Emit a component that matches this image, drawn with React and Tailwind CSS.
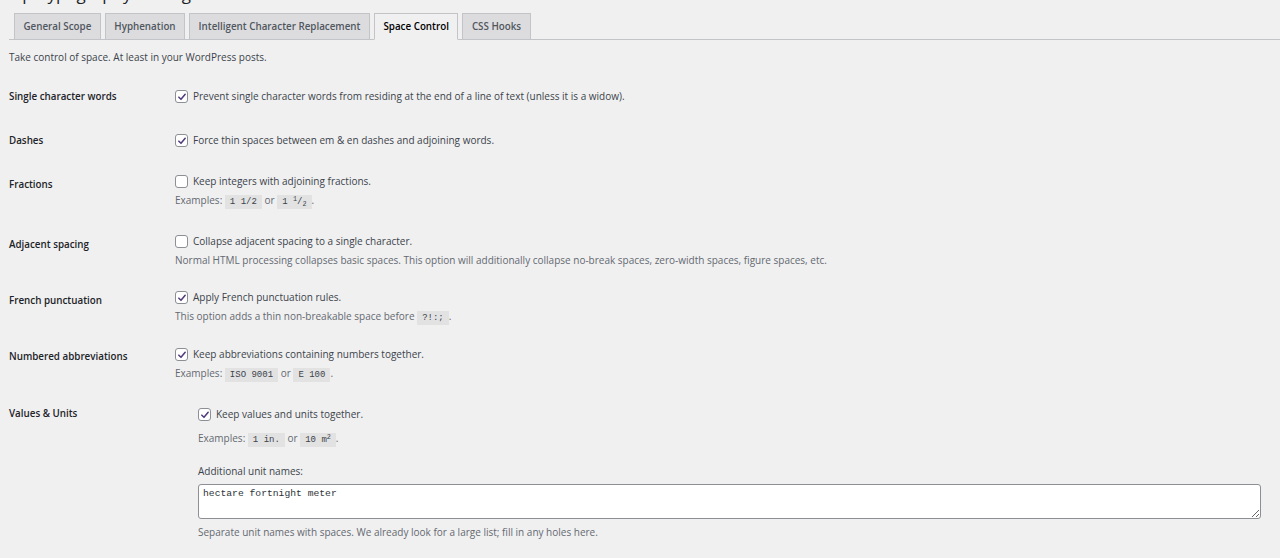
import React from 'react';

const tabs = ['General Scope', 'Hyphenation', 'Intelligent Character Replacement', 'Space Control', 'CSS Hooks'];

function Checkbox({ checked }) {
  return (
    <span className="inline-flex items-center justify-center w-[13px] h-[13px] rounded-[3px] border border-[#8c8f94] bg-white shrink-0">
      {checked && (
        <svg viewBox="0 0 12 12" className="w-[10px] h-[10px]">
          <path d="M2.2 6.2 L4.8 8.8 L9.8 2.8" fill="none" stroke="#4f3a7a" strokeWidth="1.8" strokeLinecap="round" strokeLinejoin="round" />
        </svg>
      )}
    </span>
  );
}

function Code({ children }) {
  return (
    <code className="bg-[#e2e2e3] px-[5px] py-[2px] text-[9px] text-[#3c434a]" style={{ fontFamily: '"Liberation Mono", "DejaVu Sans Mono", monospace' }}>
      {children}
    </code>
  );
}

function Option({ checked, children }) {
  return (
    <div className="flex items-center gap-[5px] h-[19px] text-[#3c434a]">
      <Checkbox checked={checked} />
      <span>{children}</span>
    </div>
  );
}

function Row({ label, labelPad = 'pt-0', className = '', children }) {
  return (
    <div className={`flex ${className}`}>
      <div className={`w-[166px] shrink-0 leading-[19px] font-semibold text-[9.8px] text-[#1d2327] ${labelPad}`}>{label}</div>
      <div className="flex-1 pr-[19px]">{children}</div>
    </div>
  );
}

export default function App() {
  return (
    <div className="min-h-screen bg-[#f0f0f1] text-[10px] text-[#3c434a] overflow-hidden" style={{ fontFamily: '"Open Sans", "Noto Sans", sans-serif' }}>
      <h1 className="text-[17px] leading-[20px] text-[#1d2327] mt-[-16px] pl-[9px]">wp-Typography Settings</h1>

      {/* Tabs */}
      <div className="flex items-end gap-[4px] pl-[5px] ml-[9px] border-b border-[#c3c4c7] mt-[9px]">
        {tabs.map((t) => (
          <div
            key={t}
            className={
              t === 'Space Control'
                ? 'h-[27px] mb-[-1px] px-[8.5px] pt-[1px] flex items-center border border-[#c3c4c7] border-b-[#f0f0f1] bg-[#f0f0f1] font-semibold text-[9.8px] text-black'
                : 'h-[26px] px-[8.5px] pt-[1px] flex items-center border border-[#c3c4c7] border-b-0 bg-[#dcdcde] font-semibold text-[9.8px] text-[#50575e]'
            }
          >
            {t}
          </div>
        ))}
      </div>

      <div className="pl-[9px]">
        <p className="mt-[9px] leading-[16px]">Take control of space. At least in your WordPress posts.</p>

        <Row label="Single character words" className="mt-[22px]">
          <Option checked>Prevent single character words from residing at the end of a line of text (unless it is a widow).</Option>
        </Row>

        <Row label="Dashes" className="mt-[25px]">
          <Option checked>Force thin spaces between em &amp; en dashes and adjoining words.</Option>
        </Row>

        <Row label="Fractions" labelPad="pt-[3px]" className="mt-[22px]">
          <Option>Keep integers with adjoining fractions.</Option>
          <p className="leading-[19px] text-[#646970]">
            Examples: <Code>1 1/2</Code> or <Code>1 <sup>1</sup>/<sub>2</sub></Code>.
          </p>
        </Row>

        <Row label="Adjacent spacing" labelPad="pt-[3px]" className="mt-[20px]">
          <Option>Collapse adjacent spacing to a single character.</Option>
          <p className="leading-[19px] text-[#646970]">
            Normal HTML processing collapses basic spaces. This option will additionally collapse no-break spaces, zero-width spaces, figure spaces, etc.
          </p>
        </Row>

        <Row label="French punctuation" labelPad="pt-[3px]" className="mt-[18px]">
          <Option checked>Apply French punctuation rules.</Option>
          <p className="leading-[19px] text-[#646970]">
            This option adds a thin non-breakable space before <Code>?!:;</Code>.
          </p>
        </Row>

        <Row label="Numbered abbreviations" labelPad="pt-[2px]" className="mt-[17px]">
          <Option checked>Keep abbreviations containing numbers together.</Option>
          <p className="leading-[19px] text-[#646970]">
            Examples: <Code>ISO 9001</Code> or <Code>E 100</Code>.
          </p>
        </Row>

        <Row label="Values &amp; Units" className="mt-[19px]">
          <div className="pl-[23px] pt-[1px]">
            <Option checked>Keep values and units together.</Option>
            <p className="mt-[5px] leading-[19px] text-[#646970]">
              Examples: <Code>1 in.</Code> or <Code>10 m<sup>2</sup></Code>.
            </p>
            <p className="mt-[12px] leading-[19px] text-[#3c434a]">Additional unit names:</p>
            <textarea
              className="mt-[3px] block w-full h-[35px] rounded-[3px] border border-[#8c8f94] bg-white px-[4px] py-[2px] text-[9.7px] leading-[14px] text-[#2c3338] resize-y"
              style={{ fontFamily: '"Liberation Mono", "DejaVu Sans Mono", monospace' }}
              defaultValue="hectare fortnight meter"
            />
            <p className="mt-[4px] leading-[19px] text-[#646970]">
              Separate unit names with spaces. We already look for a large list; fill in any holes here.
            </p>
          </div>
        </Row>
      </div>
    </div>
  );
}
